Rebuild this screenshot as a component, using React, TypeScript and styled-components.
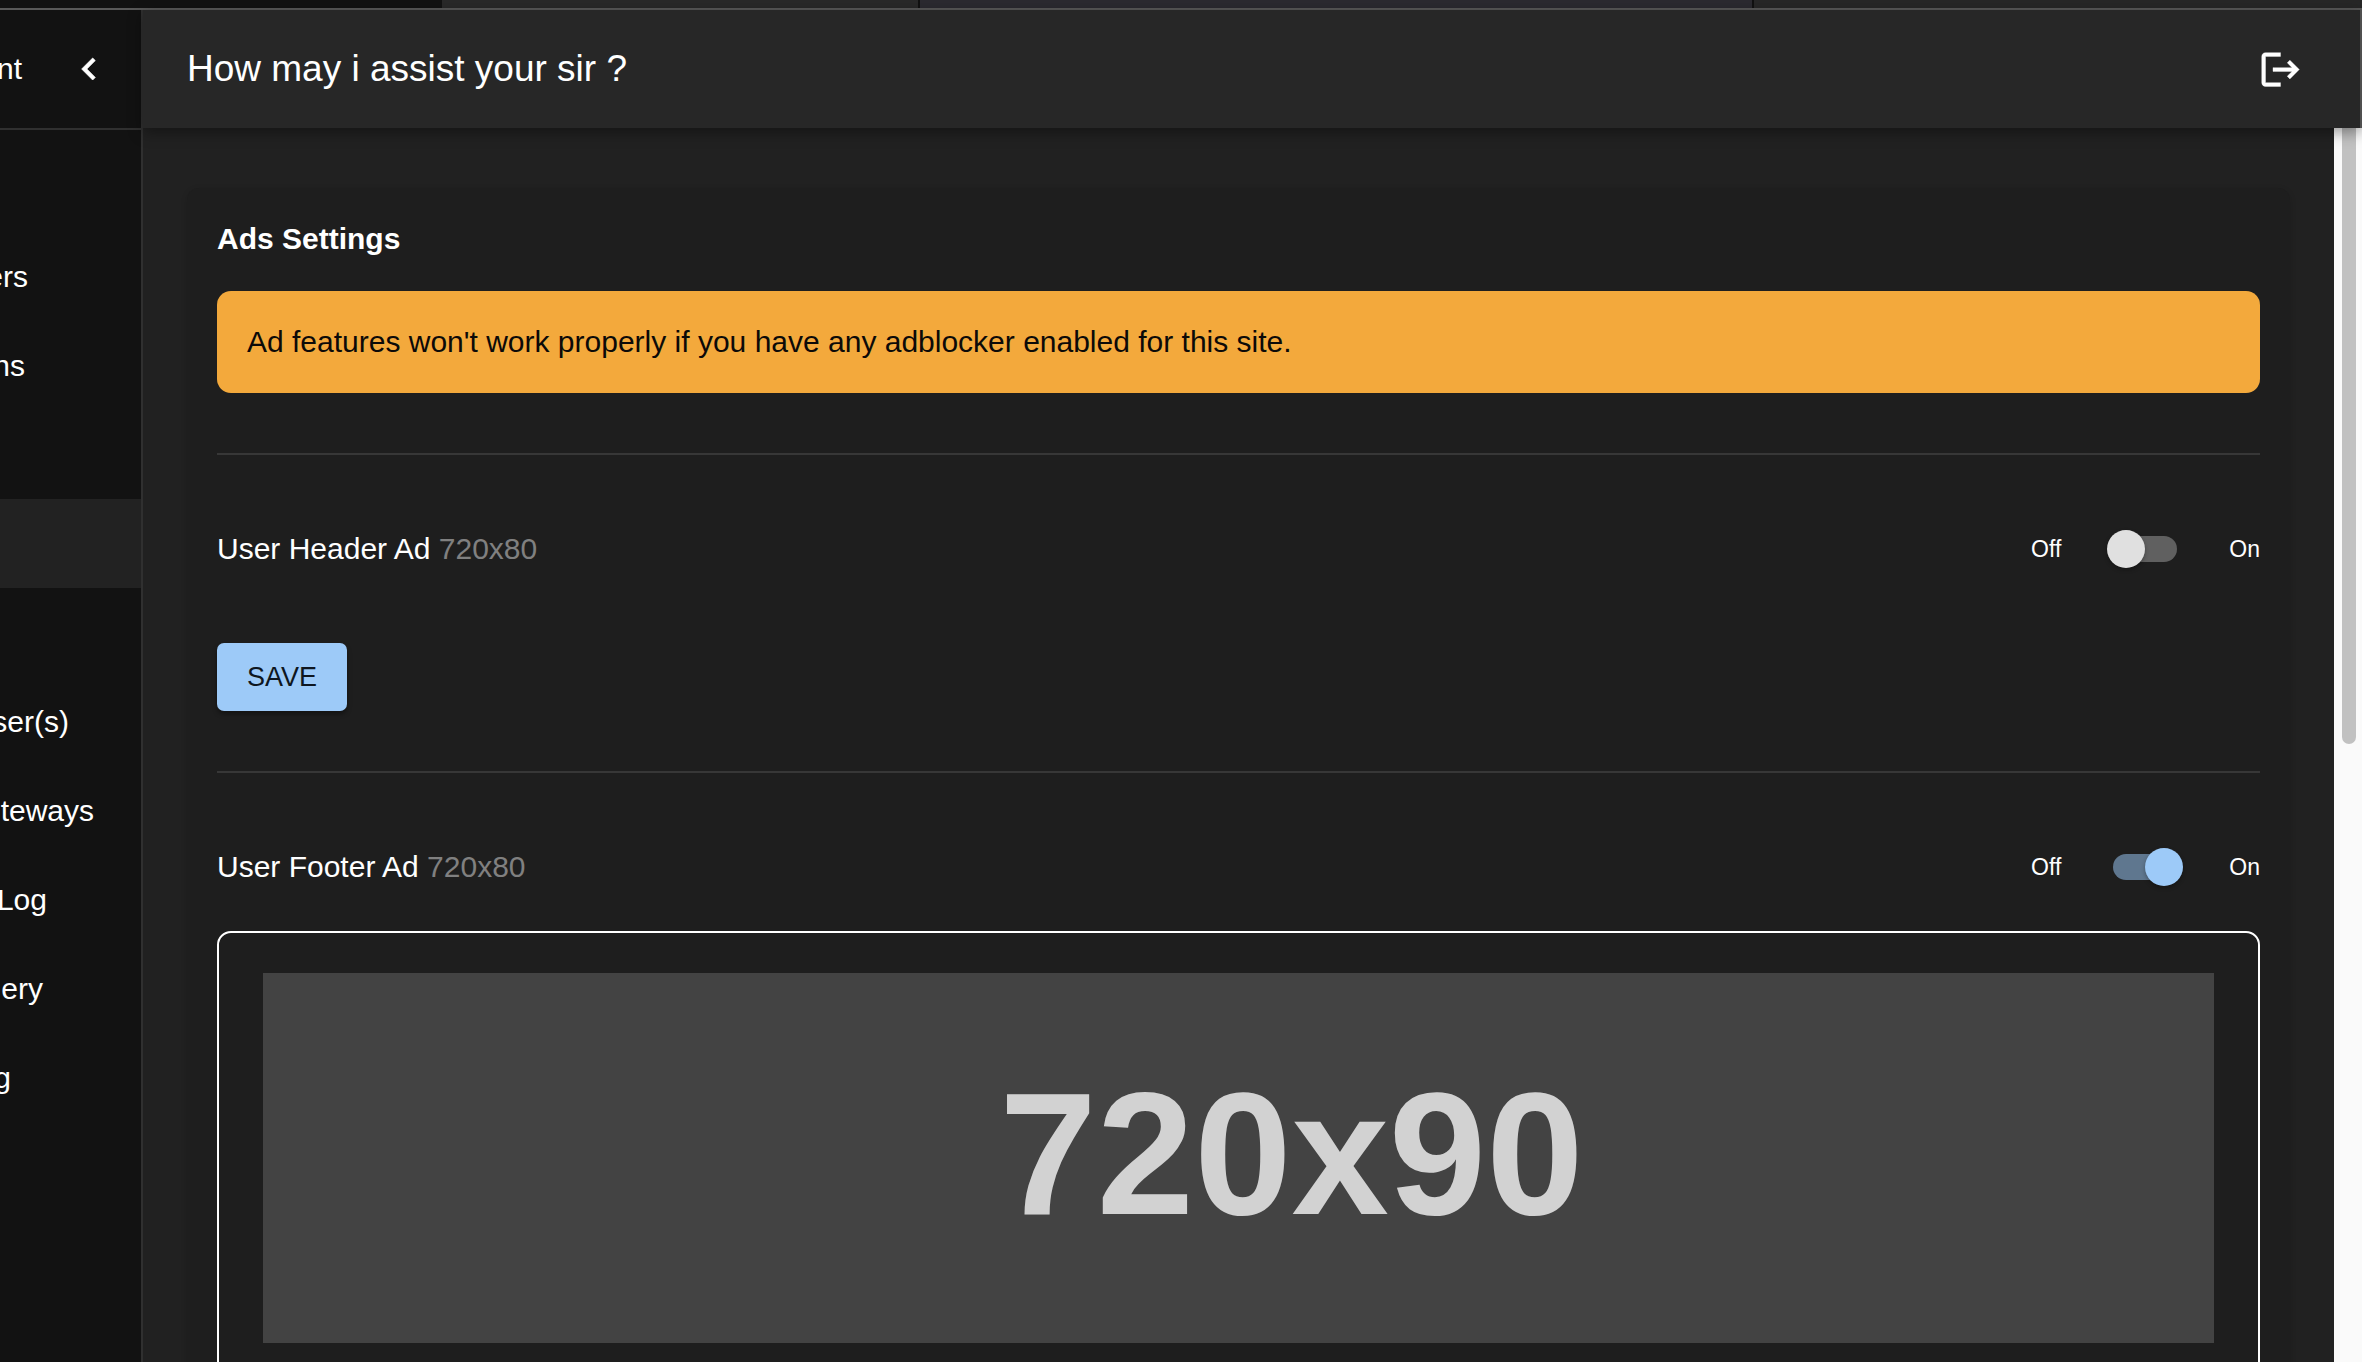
import React, { useState } from "react";
import styled, { createGlobalStyle } from "styled-components";

const GlobalStyle = createGlobalStyle`
  *, *::before, *::after { box-sizing: border-box; }
  body {
    margin: 0;
    background: #212121;
    color: #ffffff;
    font-family: "Liberation Sans", Arial, Helvetica, sans-serif;
    font-size: 30px;
    line-height: 42px;
    overflow: hidden;
  }
`;

const Window = styled.div`
  display: flex;
  flex-direction: column;
  height: 100vh;
  overflow: hidden;
`;

const TabStrip = styled.div`
  display: grid;
  grid-template-columns: 442fr 476fr 836fr 608fr;
  flex: none;
  height: 10px;
  border-bottom: 2px solid #595959;
`;

const StripTab = styled.div<{ $tone: string; $divided?: boolean }>`
  background: ${(p) => p.$tone};
  border: 0 solid #111111;
  border-width: ${(p) => (p.$divided ? "0 2px" : "0")};
`;

const Shell = styled.div`
  display: flex;
  flex: 1;
  min-height: 0;
`;

const Sidebar = styled.nav`
  flex: none;
  width: 143px;
  overflow: hidden;
  background: #121212;
  border-right: 2px solid #303030;
`;

const SidebarHead = styled.div`
  display: flex;
  align-items: center;
  justify-content: space-between;
  height: 120px;
  padding-right: 30px;
  border-bottom: 2px solid #303030;
`;

const Label = styled.span<{ $end: number }>`
  display: flex;
  flex: none;
  justify-content: flex-end;
  width: ${(p) => p.$end}px;
  white-space: nowrap;
`;

const IconButton = styled.button`
  display: flex;
  padding: 0;
  border: 0;
  background: none;
  color: #ffffff;
  cursor: pointer;
`;

const NavList = styled.ul`
  margin: 0;
  padding: 102px 0 0;
  list-style: none;
`;

const NavLink = styled.a<{ $selected?: boolean }>`
  display: flex;
  align-items: center;
  height: 89px;
  background: ${(p) => (p.$selected ? "#222222" : "transparent")};
  color: inherit;
  text-decoration: none;
`;

const Page = styled.div`
  display: flex;
  flex: 1;
  flex-direction: column;
  min-width: 0;
`;

const TopBar = styled.header`
  position: relative;
  z-index: 1;
  display: flex;
  flex: none;
  align-items: center;
  justify-content: space-between;
  height: 118px;
  padding: 0 57px 0 44px;
  background: #272727;
  border-right: 2px solid #505050;
  box-shadow: 0 4px 14px rgba(0, 0, 0, 0.4);
`;

const Greeting = styled.h1`
  margin: 0;
  font-size: 37px;
  font-weight: 400;
`;

const Body = styled.div`
  display: flex;
  flex: 1;
  min-height: 0;
`;

const Main = styled.main`
  flex: 1;
  min-width: 0;
  padding: 60px 44px 0;
  overflow: hidden;
`;

const ScrollTrack = styled.div`
  flex: none;
  width: 28px;
  padding: 0 6px 0 8px;
  background: #fafafa;
`;

const ScrollThumb = styled.div`
  height: 616px;
  border-radius: 0 0 7px 7px;
  background: #c1c1c1;
`;

const Card = styled.section`
  padding: 30px;
  border-radius: 12px;
  background: #1e1e1e;
  box-shadow: 0 2px 6px rgba(0, 0, 0, 0.15);
`;

const CardTitle = styled.h2`
  margin: 0 0 31px;
  font-size: 30px;
  font-weight: 700;
`;

const Alert = styled.p`
  margin: 0;
  padding: 30px;
  border-radius: 14px;
  background: #f3a93c;
  color: #0c0a08;
`;

const AdForm = styled.form`
  margin-top: 60px;
  padding-top: 75px;
  border-top: 2px solid #373737;
`;

const AdRow = styled.div`
  display: flex;
  align-items: center;
  justify-content: space-between;
  height: 38px;
`;

const AdName = styled.h3`
  margin: 0;
  font-size: 30px;
  font-weight: 400;
`;

const AdSize = styled.span`
  color: #808080;
`;

const Toggle = styled.label`
  display: flex;
  align-items: center;
  gap: 52px;
  font-size: 23px;
`;

const Switch = styled.input`
  position: relative;
  width: 64px;
  height: 26px;
  margin: 0;
  appearance: none;
  border-radius: 13px;
  background: #606060;
  cursor: pointer;

  &::before {
    content: "";
    position: absolute;
    top: -6px;
    left: -6px;
    width: 38px;
    height: 38px;
    border-radius: 50%;
    background: #e0e0e0;
    box-shadow: 0 2px 4px rgba(0, 0, 0, 0.3);
  }

  &:checked {
    background: #5f778f;
  }

  &:checked::before {
    left: 32px;
    background: #9dcaf8;
  }
`;

const SaveButton = styled.button`
  display: block;
  height: 68px;
  margin-top: 75px;
  padding: 0 30px;
  border: 0;
  border-radius: 7px;
  background: #9dcaf8;
  color: #0e1620;
  font: inherit;
  font-size: 27px;
  box-shadow: 0 3px 5px rgba(0, 0, 0, 0.4);
  cursor: pointer;
`;

const Preview = styled.div`
  margin-top: 45px;
  padding: 40px 44px;
  border: 2px solid #ffffff;
  border-radius: 14px;
`;

const Placeholder = styled.div`
  display: flex;
  align-items: center;
  justify-content: center;
  height: 370px;
  padding: 0 0 10px 106px;
  background: #434343;
  color: #d2d2d2;
  font-size: 175px;
  font-weight: 700;
  line-height: 175px;
`;

type NavItem = { text: string; end: number; selected?: boolean };

const navItems: NavItem[] = [
  { text: "ers", end: 28 },
  { text: "ns", end: 25 },
  { text: "", end: 0 },
  { text: "", end: 0, selected: true },
  { text: "", end: 0 },
  { text: "ser(s)", end: 69 },
  { text: "teways", end: 94 },
  { text: "Log", end: 47 },
  { text: "ery", end: 43 },
  { text: "g", end: 11 },
];

type AdProps = {
  name: string;
  size: string;
  initial: boolean;
  children: React.ReactNode;
};

function AdSection({ name, size, initial, children }: AdProps) {
  const [on, setOn] = useState(initial);
  return (
    <AdForm onSubmit={(e) => e.preventDefault()}>
      <AdRow>
        <AdName>
          {name} <AdSize>{size}</AdSize>
        </AdName>
        <Toggle>
          <span>Off</span>
          <Switch
            type="checkbox"
            role="switch"
            checked={on}
            onChange={(e) => setOn(e.target.checked)}
          />
          <span>On</span>
        </Toggle>
      </AdRow>
      {children}
    </AdForm>
  );
}

export default function App() {
  return (
    <Window>
      <GlobalStyle />
      <TabStrip>
        <StripTab $tone="#121212" />
        <StripTab $tone="#292929" />
        <StripTab $tone="#2b2a30" $divided />
        <StripTab $tone="#272727" />
      </TabStrip>
      <Shell>
        <Sidebar>
          <SidebarHead>
            <Label $end={22}>nt</Label>
            <IconButton type="button">
              <svg width="44" height="44" viewBox="0 0 24 24" fill="currentColor" stroke="currentColor" strokeWidth="0.4" strokeLinejoin="round">
                <path d="M15.41 7.41 14 6l-6 6 6 6 1.41-1.41L10.83 12z" />
              </svg>
            </IconButton>
          </SidebarHead>
          <NavList>
            {navItems.map((item, i) => (
              <li key={i}>
                <NavLink href="#" $selected={item.selected}>
                  <Label $end={item.end}>{item.text}</Label>
                </NavLink>
              </li>
            ))}
          </NavList>
        </Sidebar>
        <Page>
          <TopBar>
            <Greeting>How may i assist your sir ?</Greeting>
            <IconButton type="button">
              <svg width="45" height="45" viewBox="0 0 24 24" fill="currentColor" stroke="currentColor" strokeWidth="0.2" strokeLinejoin="round">
                <path d="m17 7-1.41 1.41L18.17 11H8v2h10.17l-2.58 2.58L17 17l5-5zM4 5h8V3H4c-1.1 0-2 .9-2 2v14c0 1.1.9 2 2 2h8v-2H4z" />
              </svg>
            </IconButton>
          </TopBar>
          <Body>
            <Main>
              <Card>
                <CardTitle>Ads Settings</CardTitle>
                <Alert>
                  Ad features won't work properly if you have any adblocker enabled for this site.
                </Alert>
                <AdSection name="User Header Ad" size="720x80" initial={false}>
                  <SaveButton type="submit">SAVE</SaveButton>
                </AdSection>
                <AdSection name="User Footer Ad" size="720x80" initial>
                  <Preview>
                    <Placeholder>720x90</Placeholder>
                  </Preview>
                </AdSection>
              </Card>
            </Main>
            <ScrollTrack>
              <ScrollThumb />
            </ScrollTrack>
          </Body>
        </Page>
      </Shell>
    </Window>
  );
}
